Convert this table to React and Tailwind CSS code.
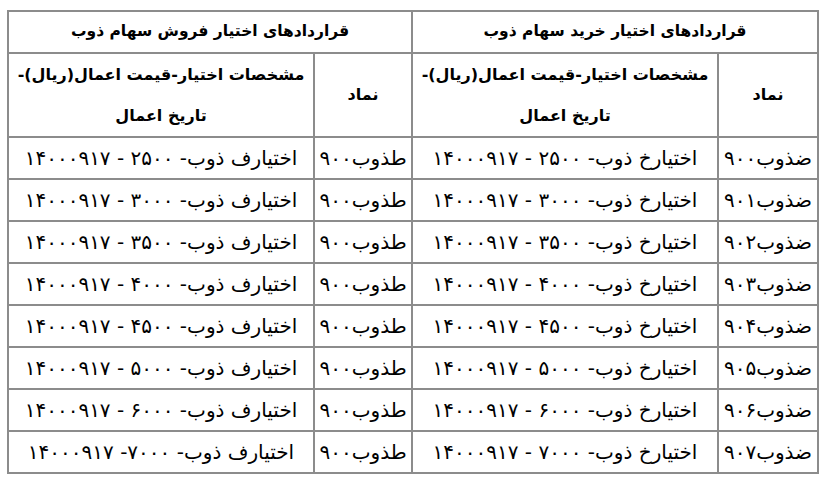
import React from "react";

const prices = ["۲۵۰۰", "۳۰۰۰", "۳۵۰۰", "۴۰۰۰", "۴۵۰۰", "۵۰۰۰", "۶۰۰۰", "۷۰۰۰"];
const buySyms = ["ضذوب۹۰۰", "ضذوب۹۰۱", "ضذوب۹۰۲", "ضذوب۹۰۳", "ضذوب۹۰۴", "ضذوب۹۰۵", "ضذوب۹۰۶", "ضذوب۹۰۷"];

const cell = "border-2 border-[#8c8c8c] text-center align-middle p-0";

export default function App() {
  return (
    <div className="bg-white w-[825px] h-[480px] pt-[10px] pl-[7px]" style={{ fontFamily: '"DejaVu Sans", sans-serif' }}>
      <table dir="rtl" className="border-collapse w-[810px] table-fixed text-[20px] text-black">
        <colgroup>
          <col className="w-[100px]" />
          <col className="w-[306px]" />
          <col className="w-[98px]" />
          <col className="w-[306px]" />
        </colgroup>
        <tbody>
          <tr className="h-[42px]">
            <td colSpan={2} className={cell + " font-bold text-[15.5px]"}>قراردادهای اختیار خرید سهام ذوب</td>
            <td colSpan={2} className={cell + " font-bold text-[15.5px]"}>قراردادهای اختیار فروش سهام ذوب</td>
          </tr>
          <tr className="h-[83px]">
            <td className={cell + " font-bold text-[16px]"}>نماد</td>
            <td className={cell + " font-bold text-[16px] leading-[41px]"}>مشخصات اختیار-قیمت اعمال(ریال)-تاریخ اعمال</td>
            <td className={cell + " font-bold text-[16px]"}>نماد</td>
            <td className={cell + " font-bold text-[16px] leading-[41px]"}>مشخصات اختیار-قیمت اعمال(ریال)-تاریخ اعمال</td>
          </tr>
          {prices.map((p, i) => (
            <tr key={i} className="h-[42px]">
              <td className={cell}>{buySyms[i]}</td>
              <td className={cell}>{"اختیارخ ذوب- " + p + " - ۱۴۰۰۰۹۱۷"}</td>
              <td className={cell}>طذوب۹۰۰</td>
              <td className={cell}>
                {i === 7 ? "اختیارف ذوب- " + p + "- ۱۴۰۰۰۹۱۷" : "اختیارف ذوب- " + p + " - ۱۴۰۰۰۹۱۷"}
              </td>
            </tr>
          ))}
        </tbody>
      </table>
    </div>
  );
}
